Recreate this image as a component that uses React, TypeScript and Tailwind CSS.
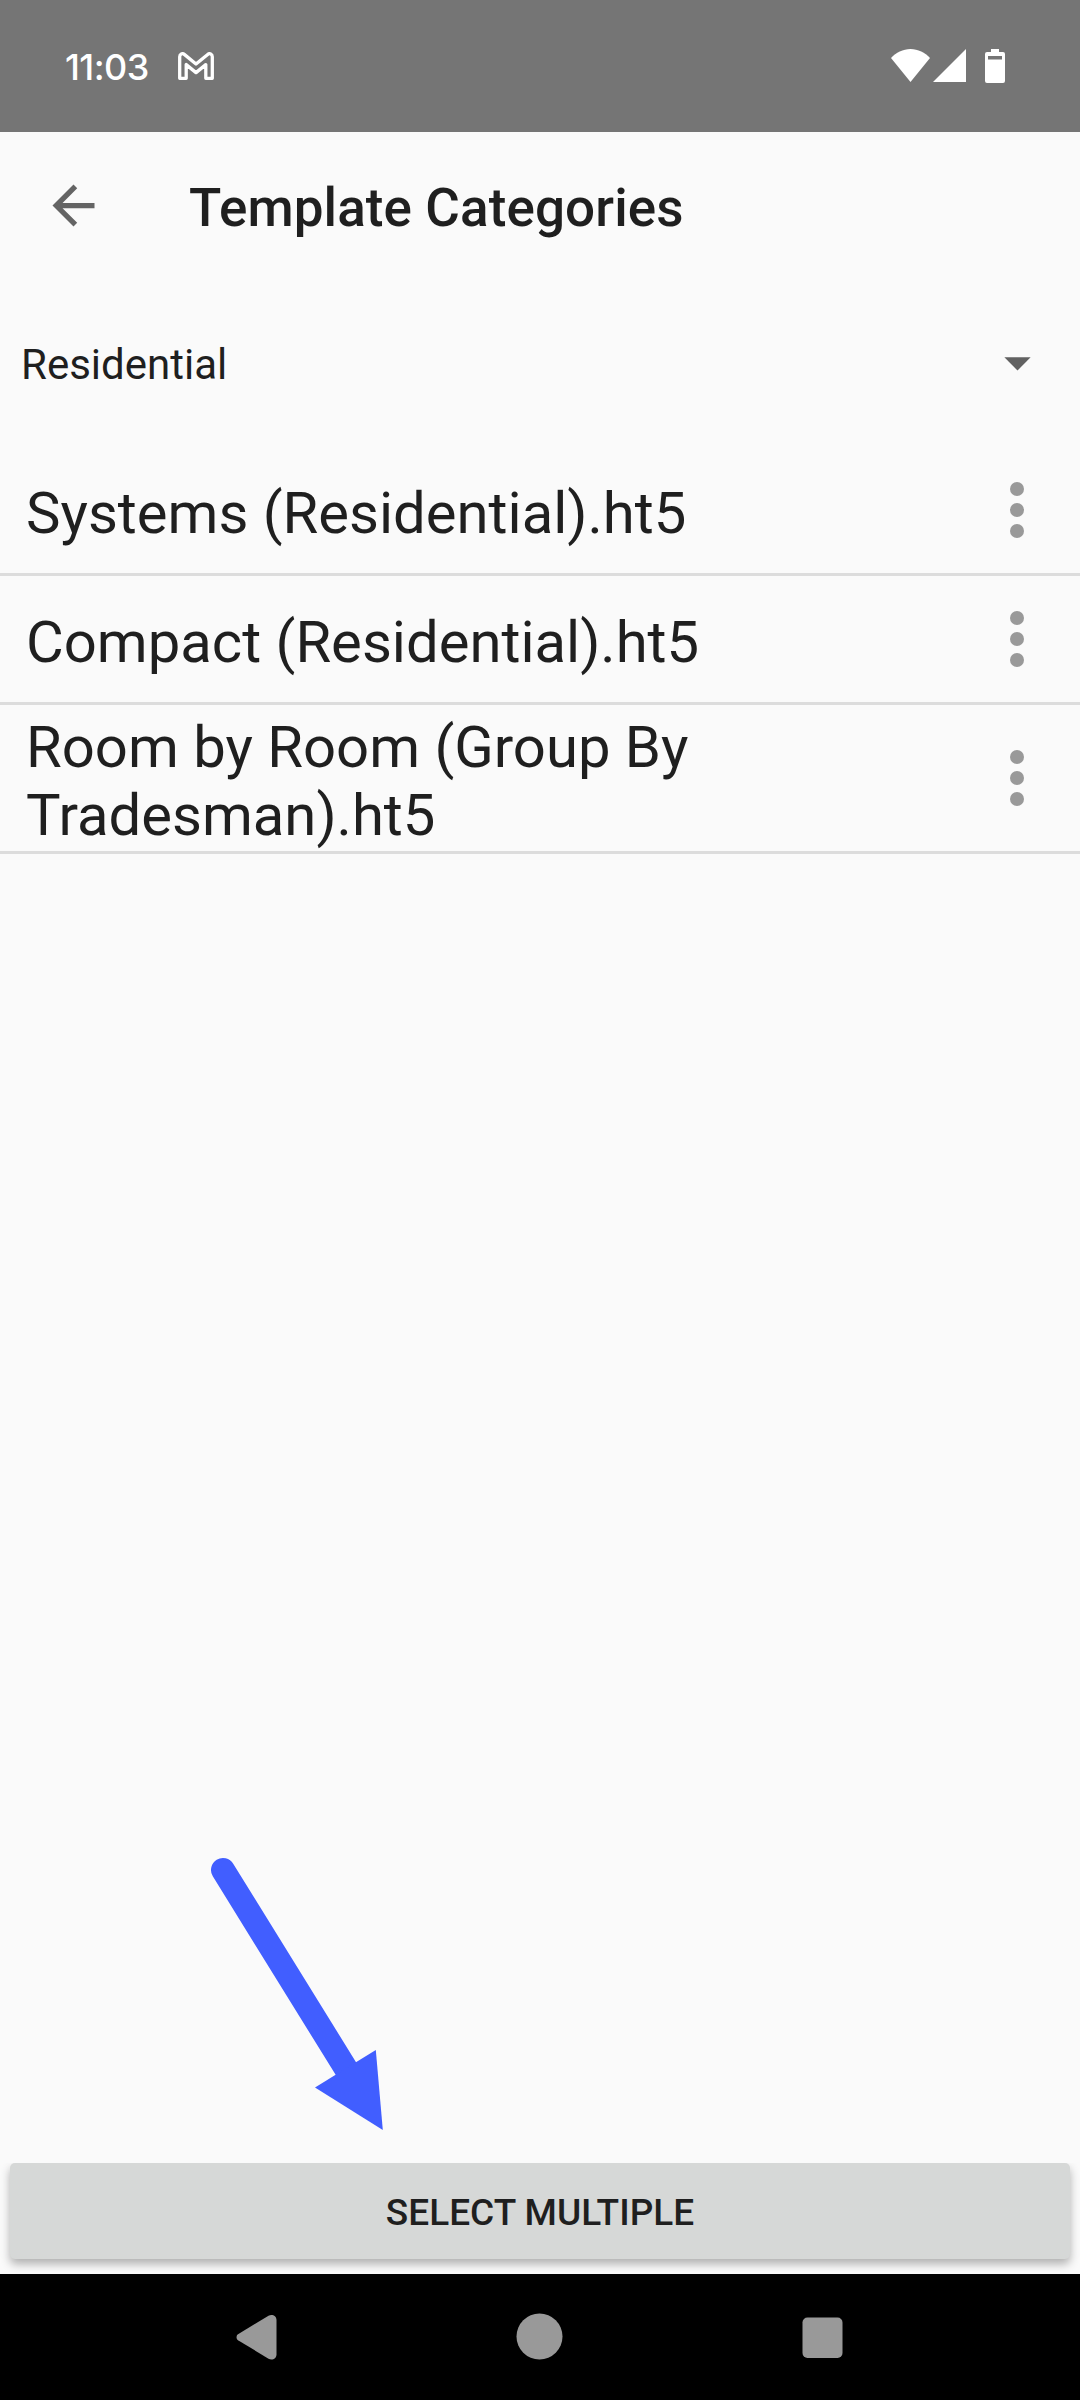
import { useState } from 'react';

const templates = [
    { id: 1, name: 'Systems (Residential).ht5' },
    { id: 2, name: 'Compact (Residential).ht5' },
    { id: 3, name: 'Room by Room (Group By Tradesman).ht5' },
];

function StatusBar() {
    return (
        <div className="h-[132px] shrink-0 bg-[#757575] text-white flex items-start justify-between pl-[65px] pr-[75px]">
            <div className="flex items-start">
                <span className="w-[113px] mt-[45px] font-['Inter',sans-serif] font-medium text-[36px] leading-[44px] tracking-[-0.6px]">11:03</span>
                <svg className="mt-[52px]" width="36" height="28" viewBox="0 0 36 28" fill="none" stroke="currentColor" strokeWidth="3.3" strokeLinejoin="round">
                    <path d="M1.7 4.7C1.7 2 4.3 .8 6.3 2.4L18 12.1L29.7 2.4C31.7 .8 34.3 2 34.3 4.7V26.3H27.8V12.6L18 20.6L8.2 12.6V26.3H1.7Z" />
                </svg>
            </div>
            <div className="flex items-start mt-[49px]">
                <svg width="39" height="33" viewBox="0 0 39 33" fill="currentColor">
                    <path d="M19.5 33L0 9C5 3.5 12 0 19.5 0S34 3.5 39 9Z" />
                </svg>
                <svg className="ml-[3px]" width="33" height="33" viewBox="0 0 33 33" fill="currentColor">
                    <path d="M33 0V33H0Z" />
                </svg>
                <svg className="ml-[19px]" width="20" height="34" viewBox="0 0 20 34" fill="currentColor">
                    <path fillRule="evenodd" d="M6 0H14V3H18Q20 3 20 5V32Q20 34 18 34H2Q0 34 0 32V5Q0 3 2 3H6ZM3 7V10.5H17V7Z" />
                </svg>
            </div>
        </div>
    );
}

function MoreDots() {
    return (
        <button className="w-[126px] shrink-0 self-stretch flex flex-col items-center justify-center gap-[7px]" aria-label="More">
            {[0, 1, 2].map(i => <span key={i} className="size-[14px] rounded-full bg-[#999999]" />)}
        </button>
    );
}

function NavBar() {
    return (
        <div className="h-[126px] shrink-0 bg-black text-[#999999]">
            <svg width="1080" height="126" viewBox="0 0 1080 126" fill="currentColor">
                <path d="M238 60.2L268.5 41.8C272 39.7 276.5 41.8 276.5 46V80.5C276.5 84.7 272 86.8 268.5 84.7L238 66.2C236 64.8 236 61.6 238 60.2Z" />
                <circle cx="539.5" cy="62.5" r="23" />
                <rect x="802.5" y="43.5" width="40" height="40.5" rx="5" />
            </svg>
        </div>
    );
}

export default function App() {
    const [category] = useState('Residential');

    return (
        <div className="relative w-[1080px] h-[2400px] overflow-hidden flex flex-col bg-[#fafafa] text-[#1f1f1f] font-['Roboto',sans-serif]">
            <StatusBar />

            <header className="h-[147px] shrink-0 flex items-center pl-[42px]">
                <svg width="63" height="63" viewBox="0 0 24 24" fill="#646464">
                    <path d="M20 11H7.83l5.59-5.59L12 4l-8 8 8 8 1.41-1.41L7.83 13H20v-2z" />
                </svg>
                <h1 className="ml-[84px] mt-[4px] text-[53px] leading-[62px] font-medium tracking-[0.1px]">Template Categories</h1>
            </header>

            <button className="h-[168px] shrink-0 flex items-center justify-between pl-[21px] pr-[31px] text-left">
                <span className="mt-[3px] text-[42px] leading-[50px]">{category}</span>
                <svg className="mb-[2px]" width="63" height="63" viewBox="0 0 24 24" fill="#616161">
                    <path d="M7 10l5 5 5-5z" />
                </svg>
            </button>

            <ul className="flex-1">
                {templates.map(t => (
                    <li key={t.id} className="flex items-center min-h-[129px] border-b-[3px] border-[#dcdcdc]">
                        <span className="flex-1 pl-[26px] pr-[100px] pt-[8px] pb-[2px] text-[58px] leading-[68px]">{t.name}</span>
                        <MoreDots />
                    </li>
                ))}
            </ul>

            <div className="h-[111px] shrink-0 px-[10px] overflow-hidden">
                <button className="w-full h-[96px] pt-[3px] rounded-[5px] bg-[#d6d8d7] shadow-[0_5px_10px_rgba(0,0,0,0.3)] text-[37px] leading-[44px] font-medium">
                    SELECT MULTIPLE
                </button>
            </div>

            <NavBar />

            {/* pointer to the button */}
            <svg className="absolute left-[200px] top-[1850px]" width="200" height="290" viewBox="200 1850 200 290" fill="#415eff">
                <path d="M223 1870L348 2072" stroke="#415eff" strokeWidth="24" strokeLinecap="round" />
                <path d="M375.8 2050L382.8 2130L315 2087.5Z" />
            </svg>
        </div>
    );
}
